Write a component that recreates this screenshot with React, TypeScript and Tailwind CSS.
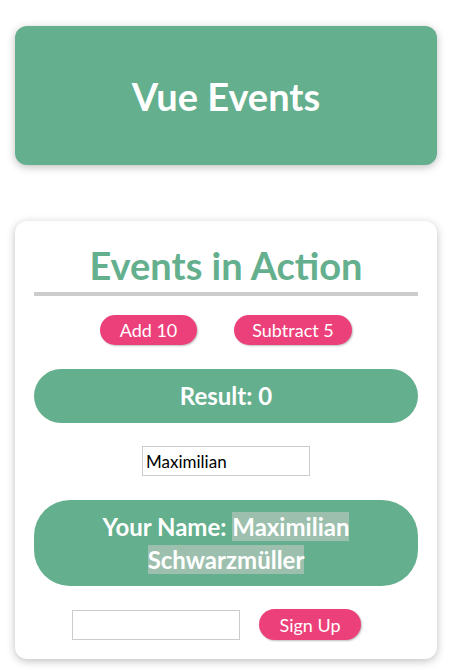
import React from "react";

export default function App() {
  return (
    <div
      className="min-h-[670px] bg-white pt-[26px] pb-[10px]"
      style={{ fontFamily: "Lato, 'Noto Sans', sans-serif" }}
    >
      <header className="mx-[15px] flex h-[139px] items-center justify-center rounded-xl bg-[#64af8d] shadow-[0_2px_8px_rgba(0,0,0,0.26)]">
        <h1 className="text-[38px] font-bold leading-none text-white">Vue Events</h1>
      </header>

      <section className="mx-[15px] mt-[56px] rounded-xl bg-white px-[19px] pt-[22px] pb-[19px] shadow-[0_2px_8px_rgba(0,0,0,0.26)]">
        <h2 className="text-center text-[38px] font-bold leading-[44px] text-[#64af8d]">
          Events in Action
        </h2>
        <div className="mt-[5px] h-[4px] bg-[#cccccc]" />

        <div className="mt-[19px] flex justify-center gap-[37px]">
          <button className="h-[30px] w-[97px] rounded-full bg-[#ec407a] text-[18px] leading-none text-white shadow-[1px_1px_2px_rgba(0,0,0,0.26)]">
            Add 10
          </button>
          <button className="h-[30px] w-[118px] rounded-full bg-[#ec407a] text-[18px] leading-none text-white shadow-[1px_1px_2px_rgba(0,0,0,0.26)]">
            Subtract 5
          </button>
        </div>

        <div className="mt-[24px] flex h-[54px] items-center justify-center rounded-full bg-[#64af8d]">
          <p className="text-[24px] font-bold text-white">Result: 0</p>
        </div>

        <div className="mt-[23px] flex justify-center">
          <input
            readOnly
            value="Maximilian"
            className="h-[30px] w-[168px] border border-[#cccccc] px-[3px] text-[17px] text-black outline-none"
            style={{ fontFamily: "Lato, 'Noto Sans', sans-serif" }}
          />
        </div>

        <div className="mt-[24px] rounded-[36px] bg-[#64af8d] px-[20px] py-[10px]">
          <p className="text-center text-[24px] font-bold leading-[33px] text-white">
            Your Name:{" "}
            <span className="bg-[#9dbfae]">Maximilian Schwarzmüller</span>
          </p>
        </div>

        <div className="mt-[23px] flex items-center justify-center gap-[19px] pr-[19px]">
          <input
            readOnly
            value=""
            className="h-[30px] w-[168px] border border-[#cccccc] px-[3px] text-[17px] outline-none"
          />
          <button className="h-[31px] w-[102px] rounded-full bg-[#ec407a] text-[18px] leading-none text-white shadow-[1px_1px_2px_rgba(0,0,0,0.26)]">
            Sign Up
          </button>
        </div>
      </section>
    </div>
  );
}
